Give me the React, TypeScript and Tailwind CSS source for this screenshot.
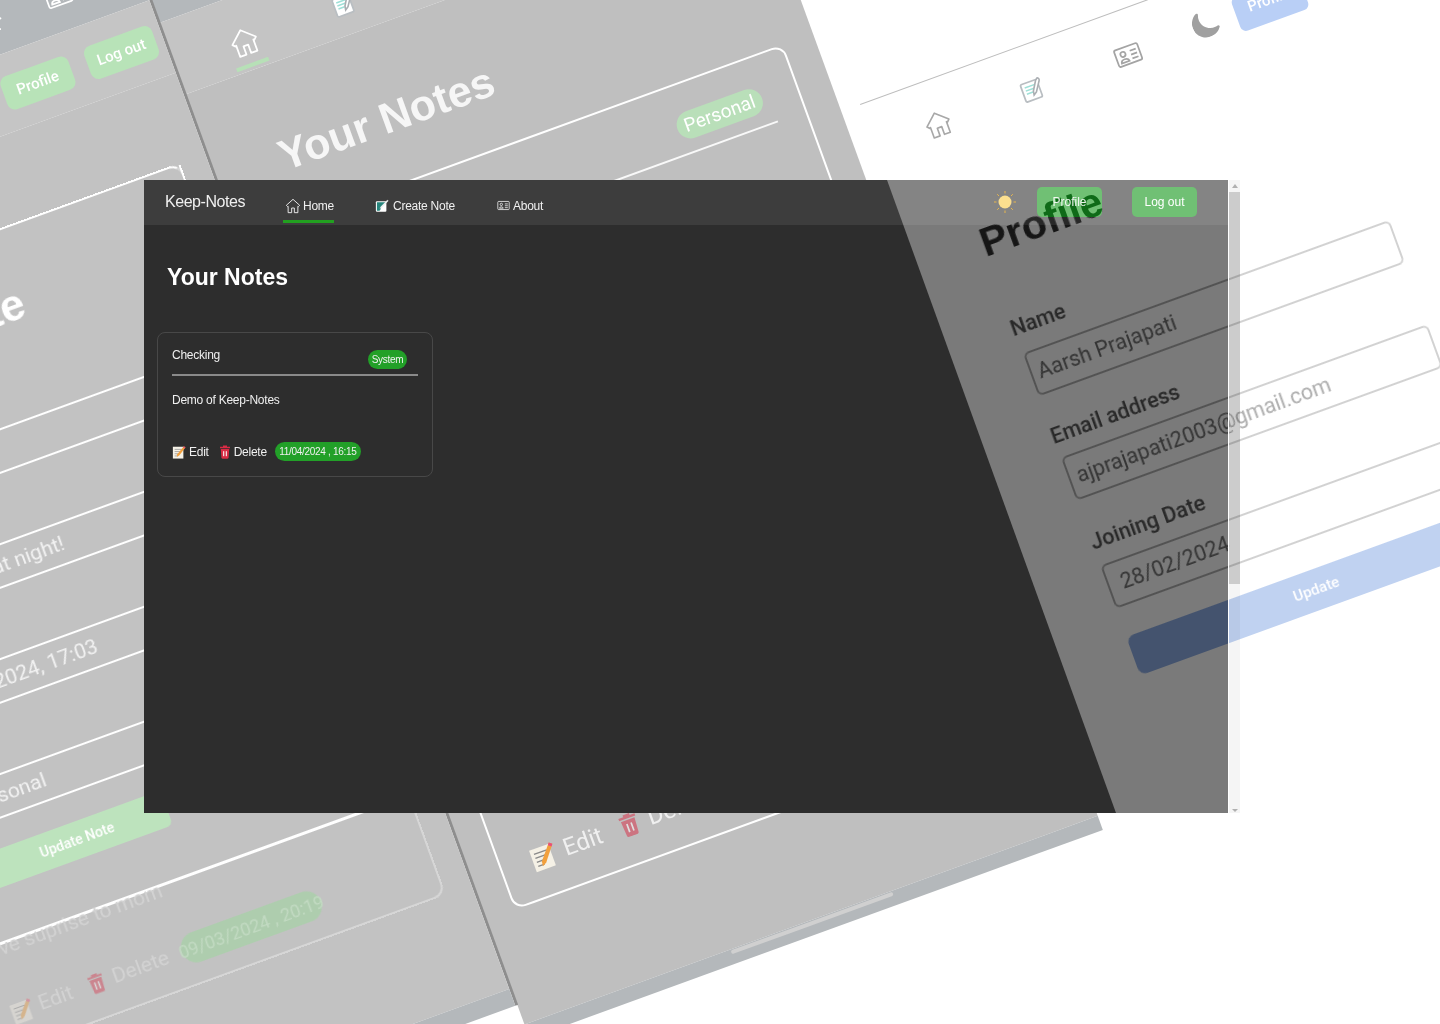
import React from 'react';
import { BsMoonFill, BsSun } from 'react-icons/bs';

const tilt = 'absolute origin-top-left -rotate-[20deg] whitespace-nowrap';
const roboto = "font-['Roboto',sans-serif]";

type IconProps = { size?: number; className?: string };

const HomeIcon = ({ size = 16, className = '' }: IconProps) => (
  <svg width={size} height={size} viewBox="0 0 24 24" fill="none" stroke="currentColor" strokeWidth="1.400" strokeLinejoin="round" className={className}>
    <path d="M12 2l10 9-2 2-.7-.6V22H14v-7h-4v7H4.700v-9.600L4 13l-2-2z" />
  </svg>
);

const CardIcon = ({ size = 13, className = '' }: IconProps) => (
  <svg width={size} height={size} viewBox="0 0 24 24" fill="none" stroke="currentColor" strokeWidth="1.500" className={className}>
    <rect x="1.500" y="4.500" width="21" height="15" rx="1.500" />
    <circle cx="8" cy="10" r="2.200" />
    <path d="M4.500 17c.4-3.500 6.600-3.500 7 0z" />
    <path d="M14.500 9h5.500M14.500 12.500h5.500M14.500 16h5.500" />
  </svg>
);

const ComposeIcon = ({ size = 14, className = '' }: IconProps) => (
  <svg width={size} height={size} viewBox="0 0 16 16" className={className}>
    <rect x="1" y="2.500" width="12" height="12" rx="1.200" fill="#fff" />
    <path d="M2.200 13.300V3.700h10.600L7 9.500 6 12.500l-1 .8z" fill="#26857c" />
    <path d="M14.200 1.200l1 1-7.600 7.600-2 1 1-2z" fill="#fff" stroke="#d8d8d8" strokeWidth=".4" />
  </svg>
);

const NoteLightIcon = ({ size = 26, className = '' }: IconProps) => (
  <svg width={size} height={size} viewBox="0 0 24 24" fill="none" className={className}>
    <rect x="3" y="4" width="16" height="17" rx="1.500" fill="#fff" stroke="#b9bec2" strokeWidth="1.600" />
    <path d="M6 8h10M6 11h8M6 14h6" stroke="#9fe0d8" strokeWidth="1.400" />
    <path d="M20 3c1.400.8 1.600 2 .8 3.200L15 15l-3 2 .6-3.600L18 4.500z" fill="#fff" stroke="#aaaeb2" strokeWidth="1.500" />
  </svg>
);

const MemoIcon = ({ size = 14, className = '' }: IconProps) => (
  <svg width={size} height={size} viewBox="0 0 16 16" className={className}>
    <rect x="1" y="2" width="12" height="13.500" fill="#f5f1e6" />
    <path d="M3 5h8M3 7.500h7M3 10h5M3 12.500h4" stroke="#8a8a8a" strokeWidth=".8" />
    <path d="M13.600 1.400l1.800 1.400L8.200 12l-2.600 1.400.4-2.900z" fill="#f2a03c" />
    <path d="M13.600 1.400l1.800 1.400-1 1.300-1.800-1.400z" fill="#e8507a" />
  </svg>
);

const TrashIcon = ({ size = 14, className = '' }: IconProps) => (
  <svg width={size} height={size} viewBox="0 0 12 14" className={className}>
    <path d="M4 .6h4v1.200h3v1.400H1V1.800h3z" fill="#d92b44" />
    <path d="M1.800 4h8.400l-.6 8.600c0 .7-.5 1.100-1.100 1.100H3.500c-.6 0-1.100-.4-1.100-1.100z" fill="#d92b44" />
    <path d="M4.700 6.200v5M7.300 6.200v5" stroke="#fff" strokeWidth="1" />
  </svg>
);

const SunIcon = () => (
  <svg width="24" height="24" viewBox="0 0 24 24" fill="none">
    <circle cx="12" cy="12" r="6.500" fill="#fbdf8f" />
    <path
      d="M12 1v2.500M12 20.500V23M1 12h2.500M20.500 12H23M4.200 4.200L6 6M18 18l1.800 1.800M4.200 19.800L6 18M18 6l1.800-1.800"
      stroke="#e6b64f"
      strokeWidth="1"
    />
  </svg>
);

// Light profile screen, sits directly on the white page
const ProfileMockup = () => (
  <>
    <div className={`${tilt} left-[860px] top-[104px] w-[306px] h-px bg-[#bdbdbd]`} />
    <div className={`${tilt} left-[919px] top-[112px] h-[36px] flex items-center`}>
      <HomeIcon size={28} className="text-[#a8a8a8]" />
      <NoteLightIcon size={26} className="ml-[73px]" />
      <CardIcon size={28} className="ml-[75px] text-[#a4a4a4]" />
      <BsMoonFill size={27} className="ml-[56px] -rotate-[5deg] -translate-y-[3px] text-[#a0a0a0]" />
      <div className={`ml-[18px] pb-[8px] w-[72px] h-[36px] rounded-md bg-[#b9cff6] flex items-center justify-center text-white text-[15px] font-medium ${roboto}`}>
        Profile
      </div>
    </div>

    <div className={`${tilt} left-[973px] top-[216px] w-[390px] flex flex-col text-[#a0a0a0]`}>
      <h1 className="-ml-[2px] h-[60px] flex items-center text-[41px] font-bold text-[#8a8a8a]">Profile</h1>
      <label className={`-ml-[3px] mt-[47px] mb-[13px] h-[26px] leading-[26px] text-[21.500px] font-medium ${roboto}`}>Name</label>
      <div className={`h-[46px] rounded-md border-2 border-[#d2d2d2] flex items-center pl-[6px] text-[21.500px] text-[#aeaeae] ${roboto}`}>Aarsh Prajapati</div>
      <label className={`-ml-[2px] mt-[30px] mb-[9px] h-[26px] leading-[26px] text-[21.500px] font-medium ${roboto}`}>Email address</label>
      <div className={`h-[46px] rounded-md border-2 border-[#d2d2d2] flex items-center pl-[7px] text-[21.500px] text-[#aeaeae] ${roboto}`}>ajprajapati2003@gmail.com</div>
      <label className={`-ml-[1px] mt-[32px] mb-[11px] h-[26px] leading-[26px] text-[21.500px] font-medium ${roboto}`}>Joining Date</label>
      <div className={`h-[46px] rounded-md border-2 border-[#d2d2d2] flex items-center pl-[12px] text-[21.500px] text-[#aeaeae] ${roboto}`}>28/02/2024</div>
      <button className={`mt-[30px] h-[41px] rounded-lg bg-[#c0d2f1] text-white text-[15px] font-medium ${roboto}`}>Update</button>
    </div>
  </>
);

// Notes list screen, middle of the collage
const NotesMockup = () => (
  <div className="absolute left-[85px] top-[-183px] w-[610px] h-[1300px] origin-top-left -rotate-[20deg] flex flex-col">
    <div className="h-[219px] bg-[#b4b8bb]" />
    <nav className="h-[76px] bg-[#c4c4c4] flex pl-[55px] pt-[33px] relative">
      <div className="flex flex-col items-center w-[36px] text-white">
        <HomeIcon size={30} className="-mt-[1px]" />
        <div className="mt-[7px] w-[34px] h-[4px] bg-[#b7e0b7]" />
      </div>
      <NoteLightIcon size={26} className="ml-[75px]" />
    </nav>
    <div className="flex-1 min-h-0 bg-[#bfbfbf] pt-[61px] pl-[30px] flex flex-col">
      <h2 className="ml-[37px] h-[60px] flex items-center text-[43px] font-bold text-[#f6f6f6] whitespace-nowrap">Your Notes</h2>
      <div className="mt-[36px] w-[548px] h-[722px] rounded-xl border-2 border-white px-[30px] pr-[29px] flex flex-col">
        <span className={`self-end mt-[28px] mr-[7px] w-[90px] h-[28px] rounded-full bg-[#b9dfb9] text-white text-[19px] flex items-center justify-center ${roboto}`}>Personal</span>
        <div className="mt-[12px] h-[2px] bg-white/90" />
        <div className={`mt-[594px] h-[30px] flex items-center text-[24px] text-[#f0f0f0] ${roboto}`}>
          <MemoIcon size={27} />
          <span className="ml-[8px]">Edit</span>
          <TrashIcon size={24} className="ml-[17px] opacity-50" />
          <span className="ml-[8px]">Delete</span>
        </div>
      </div>
    </div>
    <div className="h-[15px] bg-[#b4b8bb] flex justify-center pt-[1px]">
      <div className="w-[172px] h-[4px] rounded-full bg-[#d0d0d0]" />
    </div>
  </div>
);

// Update note screen, left of the collage
const EditMockup = () => (
  <div className="absolute left-[-738px] top-[185px] w-[900px] h-[1200px] origin-top-left -rotate-[20deg] border-r-[3px] border-[#8e8e8e] flex flex-col whitespace-nowrap">
    <div className="h-[130px] bg-[#b4b8bb] flex pl-[722px] pt-[81px] text-white">
      <BsSun size={30} />
      <CardIcon size={28} className="ml-[47px]" />
    </div>
    <nav className={`h-[77px] bg-[#c5c5c5] flex gap-[17px] pl-[728px] pt-[22px] text-white text-[15px] font-medium ${roboto}`}>
      <span className="w-[72px] h-[35px] rounded-lg bg-[#b8e3b8] flex items-center justify-center">Profile</span>
      <span className="w-[72px] h-[35px] rounded-lg bg-[#b8e3b8] flex items-center justify-center">Log out</span>
    </nav>
    <div className="flex-1 min-h-0 bg-[#c2c2c2] pt-[86px] pl-[270px]">
      <div className={`relative w-[600px] h-[779px] rounded-xl border-2 border-[#d6d6d6] border-t-white flex flex-col ${roboto}`}>
        <div className="absolute right-[-2px] top-0 w-[2px] h-[70px] bg-white" />
        <h2 className="mt-[45px] w-[548px] h-[60px] flex items-center justify-center text-[44px] font-bold text-white font-['Liberation_Sans',sans-serif]">Update Note</h2>

        <div className="mt-[81px] ml-[42px] w-[520px] flex flex-col gap-[65px] text-[21px] text-[#f2f2f2]">
          <div className="h-[43px] border-2 border-white" />
          <div className="h-[43px] border-2 border-white flex items-center justify-end pr-[201px]">Dinner at night!</div>
          <div className="h-[43px] border-2 border-white flex items-center justify-end pr-[205px]">02/03/2024, 17:03</div>
          <div className="h-[43px] border-2 border-white flex items-center justify-end pr-[299px]">Personal</div>
        </div>

        <div className="mt-[28px] flex">
          <div className="w-[365px] h-[37px] rounded-md bg-[#bde3bd] text-white text-[14px] font-medium flex items-center justify-end pr-[56px]">Update Note</div>
          <div className="ml-[28px] mt-[17px] w-[60px] h-[20px] rounded-full bg-[#bde3bd]" />
        </div>

        <div className="mt-[51px] ml-[57px] w-[510px] h-[3px] bg-white" />
        <p className="-mt-[13px] ml-[140px] h-[32px] leading-[32px] text-[21px] text-[#d2d2d2]">Give suprise to mom</p>

        <div className="mt-[34px] ml-[148px] h-[31px] flex items-center text-[21px] text-[#d2d2d2]">
          <MemoIcon size={24} className="opacity-40" />
          <span className="ml-[6px]">Edit</span>
          <TrashIcon size={21} className="ml-[15px] opacity-40" />
          <span className="ml-[7px]">Delete</span>
          <span className="ml-[14px] w-[148px] h-[31px] rounded-full bg-[#aecdae] text-[#c2dac2] text-[18px] flex items-center justify-center">09/03/2024 , 20:19</span>
        </div>
      </div>
    </div>
    <div className="h-[18px] bg-[#b4b8bb]" />
  </div>
);

const FrontWindow = () => (
  <div className="absolute left-[144px] top-[180px] w-[1084px] h-[633px] text-white">
    <div className="absolute inset-0 backdrop-brightness-[.487] backdrop-contrast-[1.744]" />
    <div className="absolute inset-0 bg-[#2d2d2d] [clip-path:polygon(0_0,743px_0,972px_633px,0_633px)]" />

    <div className="relative flex flex-col h-full">
      {/* Navbar */}
      <nav className="flex items-center h-[45px] pl-[21px] pr-[31px] bg-white/[.08] text-[12px] tracking-[-0.25px] text-[#f0f0f0]">
        <span className="text-[16px] tracking-[-0.45px] mr-[38px] leading-none -mt-[1px]">Keep-Notes</span>
        <a className="flex items-center self-start h-[43px] pt-[11px] pl-[2px] gap-[2px] border-b-[3px] border-[#22a020] mr-[41px]">
          <HomeIcon />
          Home
        </a>
        <a className="flex items-center gap-[4px] pt-[6px] mr-[42px]">
          <ComposeIcon />
          Create Note
        </a>
        <a className="flex items-center gap-[3px] pt-[6px]">
          <CardIcon />
          About
        </a>
        <div className="ml-auto -mt-[1px] flex items-center">
          <SunIcon />
          <button className="relative overflow-hidden ml-[20px] w-[65px] h-[30px] rounded-[5px] bg-[#70c074] text-[12px] tracking-normal text-white/90">
            <span className="absolute -rotate-[20deg] flex items-center origin-top-left left-[-66px] top-[29px] h-[60px] text-[41px] font-bold text-[#0f6b18] whitespace-nowrap">Profile</span>
            <span className="relative">Profile</span>
          </button>
          <button className="ml-[30px] w-[65px] h-[30px] rounded-[5px] bg-[#70c074] text-[12px] tracking-normal text-white">Log out</button>
        </div>
      </nav>

      <h2 className="pl-[23px] pt-[38px] text-[23px] leading-[28px] font-bold">Your Notes</h2>

      {/* Note card */}
      <div className="ml-[13px] mt-[41px] w-[276px] h-[145px] rounded-lg border border-[#484848] px-[14px] pt-[14px] text-[12px] tracking-[-0.25px] text-[#f0f0f0]">
        <div className="flex justify-between items-start">
          <span className="leading-[16px]">Checking</span>
          <span className="mt-[3px] mr-[11px] w-[39px] h-[19px] text-center rounded-full bg-[#22a028] text-[10px] tracking-[-0.3px] leading-[19px]">System</span>
        </div>
        <div className="mt-[5px] h-[2px] bg-[#8a8a8a]" />
        <p className="mt-[16px] leading-[16px]">Demo of Keep-Notes</p>
        <div className="mt-[34px] flex items-center h-[19px]">
          <MemoIcon />
          <span className="ml-[3px]">Edit</span>
          <TrashIcon className="ml-[9px]" />
          <span className="ml-[2px]">Delete</span>
          <span className="ml-[8px] w-[86px] h-[19px] text-center rounded-full bg-[#22a028] text-[10px] tracking-[-0.3px] leading-[19px]">11/04/2024 , 16:15</span>
        </div>
      </div>
    </div>
  </div>
);

export default function App() {
  return (
    <div className="relative w-[1440px] h-[1024px] overflow-hidden bg-white font-['Liberation_Sans',Arial,sans-serif]">
      {/* The tilted mockups behind the front window */}
      <div className="absolute inset-0 blur-[0.4px]">
        <ProfileMockup />
        <NotesMockup />
        <EditMockup />
      </div>
      <FrontWindow />
      {/* Scrollbar of the front window */}
      <div className="absolute left-[1228px] top-[180px] w-[12px] h-[633px] border-l border-white bg-black/[.04] flex flex-col items-center">
        <div className="mt-[4px] w-0 h-0 border-x-[3px] border-x-transparent border-b-[4px] border-b-[#b0b0b0]" />
        <div className="mt-[4px] w-full h-[392px] bg-black/[.17]" />
        <div className="mt-auto mb-px w-0 h-0 border-x-[3px] border-x-transparent border-t-[3px] border-t-[#b0b0b0]" />
      </div>
    </div>
  );
}
